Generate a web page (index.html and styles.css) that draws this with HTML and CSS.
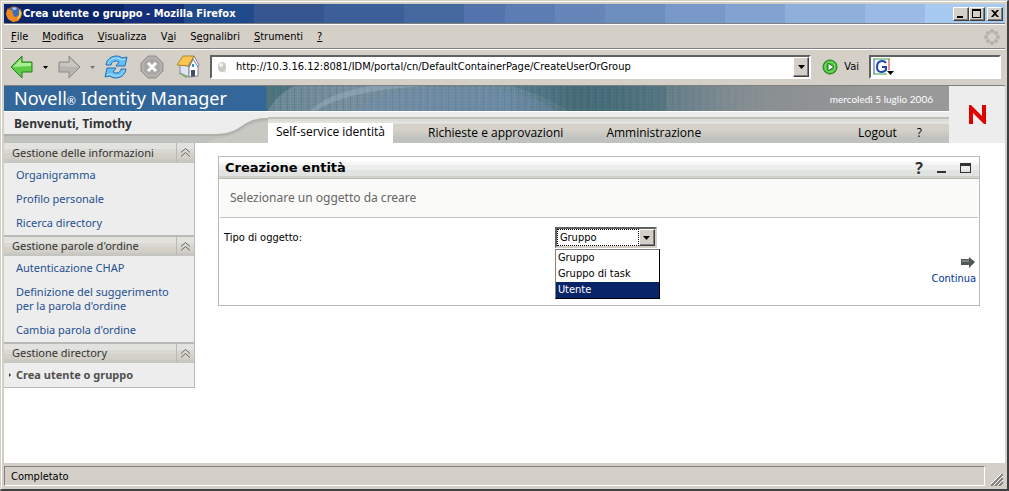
FILE: index.html
```html
<!DOCTYPE html>
<html lang="it">
<head>
    <meta charset="UTF-8">
    <meta name="viewport" content="width=device-width, initial-scale=1.0">
    <title>Crea utente o gruppo - Mozilla Firefox</title>
    <link rel="stylesheet" href="styles.css">
</head>
<body>
    <div class="window">
        <header class="titlebar">
            <svg class="fox" viewBox="0 0 16 16" aria-hidden="true">
                <circle cx="8" cy="8" r="7.500" fill="#d9600f"/>
                <circle cx="8.500" cy="6.500" r="5.500" fill="#3b6cc0"/>
                <path d="M6 2l3-1 2 2-2 1-2 0z" fill="#9cc6f0"/>
                <path d="M1 4l1-2 1 2 2 0 2 1-1 2 2 1-1 2 3 1 3-2 1-3 0-4 2 5-1 4-3 4-5 1-5-3-2-5z" fill="#f08a1c"/>
                <path d="M13 3l2 4-1 4-3 3 2-5z" fill="#fbd24a"/>
            </svg>
            <h1>Crea utente o gruppo - Mozilla Firefox</h1>
            <div class="window-buttons">
                <button type="button" aria-label="Riduci a icona"><svg viewBox="0 0 12 10"><path d="M2 7h6v2H2z"/></svg></button>
                <button type="button" aria-label="Ingrandisci"><svg viewBox="0 0 12 10"><path d="M1 0h9v9H1zM2 2v6h7V2z" fill-rule="evenodd"/></svg></button>
                <button type="button" class="close" aria-label="Chiudi"><svg viewBox="0 0 12 10"><path d="M2 1h2l2 2 2-2h2L7 4.500 10 8H8L6 6 4 8H2l3-3.500z"/></svg></button>
            </div>
        </header>

        <nav class="menubar">
            <button type="button"><u>F</u>ile</button>
            <button type="button"><u>M</u>odifica</button>
            <button type="button"><u>V</u>isualizza</button>
            <button type="button">V<u>a</u>i</button>
            <button type="button">S<u>e</u>gnalibri</button>
            <button type="button"><u>S</u>trumenti</button>
            <button type="button"><u>?</u></button>
            <svg class="throbber" viewBox="0 0 16 16" fill="#b2b0ac" aria-hidden="true">
                <circle cx="8" cy="2" r="2"/><circle cx="12" cy="4" r="2"/><circle cx="14" cy="8" r="2"/><circle cx="12" cy="12" r="2"/>
                <circle cx="8" cy="14" r="2"/><circle cx="4" cy="12" r="2"/><circle cx="2" cy="8" r="2"/><circle cx="4" cy="4" r="2"/>
            </svg>
        </nav>

        <div class="toolbar">
            <button type="button" aria-label="Indietro">
                <svg width="24" height="24" viewBox="0 0 24 24"><path d="M1 12L12 1v6h10v10H12v6z" fill="#5ccb45" stroke="#22811b"/><path d="M3 12l8-8v4h10v3z" fill="#a8ee93"/></svg>
            </button>
            <button type="button" class="history" aria-label="Cronologia indietro"><svg width="5" height="3" viewBox="0 0 5 3"><path d="M0 0h5L2.500 3z"/></svg></button>
            <button type="button" aria-label="Avanti">
                <svg width="24" height="24" viewBox="0 0 24 24"><path d="M23 12L12 1v6H2v10h10v6z" fill="#b6b5b2" stroke="#8c8b88"/><path d="M21 12l-8-8v4H3v3z" fill="#c8c7c4"/></svg>
            </button>
            <button type="button" class="history" aria-label="Cronologia avanti"><svg width="5" height="3" viewBox="0 0 5 3"><path d="M0 0h5L2.500 3z" fill="#777"/></svg></button>
            <button type="button" class="reload" aria-label="Ricarica">
                <svg width="24" height="24" viewBox="0 0 24 24" fill="#62bdf8" stroke="#2670b4">
                    <path d="M2 10C3 4 7 1 13 1c2 0 4 1 5 2l5-1-2 9h-9l3-4c-4-2-7-1-8 3z"/>
                    <path d="M22 14c-1 6-5 9-11 9-2 0-4-1-5-2l-5 1 2-9h9l-3 4c4 2 7 1 8-3z"/>
                    <path d="M4 9c1-4 5-6 9-6l5 2 3-1M20 15c-1 4-5 6-9 6l-5-2-3 1" fill="none" stroke="#b4e2fc"/>
                </svg>
            </button>
            <button type="button" class="stop" aria-label="Interrompi">
                <svg width="24" height="24" viewBox="0 0 24 24"><path d="M8 1h8l7 7v8l-7 7H8l-7-7V8z" fill="#a9a8a5" stroke="#93918d"/><path d="M8 3h8l5 5v8l-5 5H8l-5-5V8z" fill="none" stroke="#bdbcb8"/><path d="M8 8l8 8M16 8l-8 8" stroke="#fff" stroke-width="3"/></svg>
            </button>
            <button type="button" class="home" aria-label="Pagina iniziale">
                <svg width="24" height="24" viewBox="0 0 24 24">
                    <path d="M4 10l9 1v11l-9-4z" fill="#dfe5f0" stroke="#7d8799"/>
                    <path d="M13 11l5-8 4 8v10l-9 1z" fill="#fafbfd" stroke="#7d8799"/>
                    <path d="M18 1l5 9-1 2-5-8-4 8z" fill="#f2f4f8" stroke="#7d8799"/>
                    <path d="M1 10L7 1h11l-6 10z" fill="#fbc650" stroke="#b0852a"/>
                    <path d="M15 15h4v6l-4 1z" fill="#4a4f5e"/><path d="M16 9h2v3h-2z" fill="#3590d4"/>
                    <path d="M2 18l3 0 7 4-2 1z" fill="#86b072"/>
                </svg>
            </button>
            <form class="address">
                <svg class="page-icon" width="12" height="12" viewBox="0 0 12 12" aria-hidden="true"><path d="M2 10h7l2 1-4 1z" fill="#eee"/><rect x="1" y="1" width="8" height="10" rx="4" fill="#ccccc7"/><circle cx="4" cy="4" r="2" fill="#f3f3f0"/></svg>
                <input type="text" aria-label="Indirizzo" value="http://10.3.16.12:8081/IDM/portal/cn/DefaultContainerPage/CreateUserOrGroup">
                <button type="button" class="raised" aria-label="Mostra indirizzi"><svg width="7" height="4" viewBox="0 0 7 4"><path d="M0 0h7L3.500 4z"/></svg></button>
            </form>
            <button type="button" class="go">
                <svg width="16" height="16" viewBox="0 0 16 16" aria-hidden="true"><circle cx="8" cy="8" r="7" fill="#45bd35" stroke="#1d7d1b"/><circle cx="8" cy="8" r="5" fill="none" stroke="#91e67c"/><path d="M6 4l6 4-6 4z" fill="#fff" stroke="#187318"/></svg>
                Vai
            </button>
            <form class="search">
                <svg width="22" height="18" viewBox="0 0 22 18" aria-hidden="true">
                    <path d="M1 16V1" stroke="#2560c8"/><path d="M0 1h17" stroke="#35a24a"/><path d="M16 1v11" stroke="#d4302c"/><path d="M0 16h14" stroke="#35a24a"/>
                    <path d="M13 5C11 2 4 2 4 9c0 6 6 6 9 3V9H9" fill="none" stroke="#2145b0" stroke-width="2"/>
                    <path d="M14 13h7l-3.500 4z"/>
                </svg>
                <input type="text" aria-label="Cerca">
            </form>
        </div>

        <div class="page">
            <header class="masthead">
                <div class="masthead-rows">
                    <div class="brand-row">
                        <div class="brand">Novell<small>®</small> Identity Manager</div>
                        <div class="banner">
                            <svg class="waves" viewBox="0 0 683 25" preserveAspectRatio="none" aria-hidden="true">
                                <path d="M0 0H28C16 6 8 14 2 25H0z" fill="#2f5f68" opacity=".5"/>
                                <path d="M50 25C72 10 110 3 160 0H104C70 6 56 14 44 25z" fill="#b4c8d6" opacity=".3"/>
                                <path d="M86 25C106 10 130 4 170 2C240 0 270 10 290 25z" fill="#6f8cae" opacity=".35"/>
                                <path d="M246 0C272 8 290 16 302 25H400V0z" fill="#1d5663" opacity=".2"/>
                            </svg>
                            <time datetime="2006-07-05">mercoledì 5 luglio 2006</time>
                        </div>
                    </div>
                    <div class="nav-row">
                        <div class="greeting">
                            <svg viewBox="0 0 264 31" aria-hidden="true">
                                <path d="M0 22H212C240 22 236 7 264 7V31H0z" fill="#bfc1bc"/>
                                <path d="M214 26C240 24 240 10 264 10V31H200z" fill="#c9c9c3"/>
                                <path d="M0 0H264V6C236 6 240 22 212 22H0z" fill="#ededed"/>
                                <path d="M264 7C236 7 240 23 212 23H0" fill="none" stroke="#b1b1ab" stroke-width="2"/>
                            </svg>
                            <strong>Benvenuti, Timothy</strong>
                        </div>
                        <nav class="tabs">
                            <a href="#" class="active">Self-service identità</a>
                            <a href="#">Richieste e approvazioni</a>
                            <a href="#">Amministrazione</a>
                            <a href="#" class="logout">Logout</a>
                            <a href="#" class="help">?</a>
                        </nav>
                    </div>
                </div>
                <div class="logo">
                    <svg width="17" height="19" viewBox="0 0 17 19" role="img" aria-label="Novell"><path d="M0 0h2L13 11V0h4v19h-2L4 8v11H0z" fill="#e00000"/></svg>
                </div>
            </header>

            <div class="content">
                <aside class="sidebar">
                    <section>
                        <h2>Gestione delle informazioni <button type="button" aria-label="Comprimi"><svg viewBox="0 0 9 9"><path d="M0 4.500l4.500-4 4.500 4M0 8.500l4.500-4 4.500 4"/></svg></button></h2>
                        <ul>
                            <li><a href="#">Organigramma</a></li>
                            <li><a href="#">Profilo personale</a></li>
                            <li><a href="#">Ricerca directory</a></li>
                        </ul>
                    </section>
                    <section>
                        <h2>Gestione parole d'ordine <button type="button" aria-label="Comprimi"><svg viewBox="0 0 9 9"><path d="M0 4.500l4.500-4 4.500 4M0 8.500l4.500-4 4.500 4"/></svg></button></h2>
                        <ul>
                            <li><a href="#">Autenticazione CHAP</a></li>
                            <li><a href="#">Definizione del suggerimento<br>per la parola d'ordine</a></li>
                            <li><a href="#">Cambia parola d'ordine</a></li>
                        </ul>
                    </section>
                    <section>
                        <h2>Gestione directory <button type="button" aria-label="Comprimi"><svg viewBox="0 0 9 9"><path d="M0 4.500l4.500-4 4.500 4M0 8.500l4.500-4 4.500 4"/></svg></button></h2>
                        <ul>
                            <li class="current"><a href="#">Crea utente o gruppo</a></li>
                        </ul>
                    </section>
                </aside>

                <main class="portlet">
                    <header class="portlet-title">
                        <h2>Creazione entità</h2>
                        <button type="button" class="portlet-help" aria-label="Guida">?</button>
                        <button type="button" aria-label="Riduci"><svg width="11" height="10" viewBox="0 0 11 10"><path d="M1 8h9v2H1z"/></svg></button>
                        <button type="button" aria-label="Ingrandisci"><svg width="11" height="10" viewBox="0 0 11 10"><path d="M0 0h11v10H0zM1 3v6h9V3z" fill-rule="evenodd"/></svg></button>
                    </header>
                    <p class="intro">Selezionare un oggetto da creare</p>
                    <form class="fields">
                        <label for="objectType">Tipo di oggetto:</label>
                        <div class="combo">
                            <select id="objectType">
                                <option>Gruppo</option>
                                <option>Gruppo di task</option>
                                <option>Utente</option>
                            </select>
                            <span class="raised combo-arrow"><svg width="7" height="4" viewBox="0 0 7 4"><path d="M0 0h7L3.500 4z"/></svg></span>
                            <ul class="options">
                                <li>Gruppo</li>
                                <li>Gruppo di task</li>
                                <li class="selected">Utente</li>
                            </ul>
                        </div>
                        <a href="#" class="continue">
                            <svg width="15" height="11" viewBox="0 0 15 11" aria-hidden="true"><path d="M0 2h8V0l6 5-6 6V8H0z" fill="#505656"/><path d="M1 3h7v2H1z" fill="#7e8484"/></svg>
                            Continua
                        </a>
                    </form>
                </main>
            </div>
        </div>

        <footer class="statusbar">
            <div class="status">Completato</div>
            <svg class="grip" width="12" height="12" viewBox="0 0 12 12" stroke="#808080" stroke-width="2" aria-hidden="true">
                <path d="M0 12L12 0M4 12l8-8M8 12l4-4"/><path d="M-1 11L11-1M3 11l9-9M7 11l5-5" stroke="#fff" stroke-width="1"/>
            </svg>
        </footer>
    </div>
</body>
</html>
```

FILE: styles.css
```css
* {
    box-sizing: border-box;
}

body {
    margin: 0;
    font: 11px/14px "DejaVu Sans Condensed", "DejaVu Sans", sans-serif;
    color: #000;
}

h1, h2, p, ul, form {
    margin: 0;
    padding: 0;
}

ul {
    list-style: none;
}

a {
    text-decoration: none;
}

button {
    display: flex;
    align-items: center;
    margin: 0;
    padding: 0;
    border: 0;
    background: none;
    font: inherit;
    color: inherit;
}

svg {
    display: block;
    flex: none;
}

input, select {
    min-width: 0;
    margin: 0;
    padding: 0;
    border: 0;
    background: none;
    font: inherit;
    color: inherit;
}

.window {
    display: flex;
    flex-direction: column;
    min-height: 100vh;
    padding: 3px 2px 2px 3px;
    border: solid;
    border-width: 1px 2px 2px 1px;
    border-color: #d4d0c8 #404040 #404040 #d4d0c8;
    box-shadow: inset 1px 1px #fff;
    background: #d4d0c8;
}

/* Title bar */
.titlebar {
    display: flex;
    align-items: center;
    height: 19px;
    padding: 0 2px;
    background: linear-gradient(to right,
        #0a246a 0 12%, #14307a 12% 18%, #1f4b8c 18% 25%, #35568f 25% 32%,
        #3c5f9a 32% 40%, #45689f 40% 46%, #5273ac 46% 50%, #5c7db3 50% 55%,
        #6685b8 55% 60%, #6d8fc0 60% 66%, #7798c8 66% 72%, #82a3d1 72% 78%,
        #90b0dc 78% 86%, #9bbbe6 86% 92%, #a6caf0 92%);
}

.fox {
    width: 16px;
    height: 16px;
}

.titlebar h1 {
    flex: 1;
    padding-left: 1px;
    font-size: 11px;
    color: #fff;
}

.window-buttons {
    display: flex;
}

.window-buttons button,
.raised {
    display: flex;
    align-items: center;
    justify-content: center;
    width: 16px;
    height: 14px;
    border: 1px solid;
    border-color: #fff #404040 #404040 #fff;
    background: #d4d0c8;
    box-shadow: inset -1px -1px #808080;
}

.window-buttons .close {
    margin-left: 2px;
}

.window-buttons svg {
    width: 12px;
    height: 10px;
}

/* Menu and toolbar */
.menubar {
    display: flex;
    align-items: center;
    gap: 14px;
    height: 26px;
    padding: 1px 5px 0 7px;
    border-top: 1px solid #808080;
    border-bottom: 1px solid #808080;
    box-shadow: inset 0 1px #fff;
}

.throbber {
    width: 16px;
    height: 16px;
    margin-left: auto;
}

.toolbar {
    display: flex;
    align-items: center;
    height: 37px;
    padding: 0 4px 0 6px;
    border-bottom: 1px solid #808080;
    box-shadow: inset 0 1px #fff;
}

.history {
    width: 23px;
    justify-content: center;
}

.reload, .stop {
    margin-right: 12px;
}

.address, .search {
    display: flex;
    align-items: center;
    height: 24px;
    border: 2px solid;
    border-color: #606060 #fff #fff #606060;
    background: #fff;
}

.address {
    flex: 1;
    margin-left: 10px;
    padding-left: 5px;
}

.address input {
    flex: 1;
    padding-left: 7px;
}

.address .raised {
    height: 20px;
}

.go {
    gap: 6px;
    margin: 0 10px 0 11px;
}

.search {
    width: 132px;
    padding-left: 2px;
}

.search input {
    flex: 1;
}

/* Portal header */
.page {
    flex: 1;
    display: flex;
    flex-direction: column;
    background: #fff;
    font-family: "Noto Sans", "Open Sans", sans-serif;
}

.masthead {
    display: flex;
}

.masthead-rows {
    flex: 1;
}

.brand-row {
    display: flex;
    height: 25px;
}

.brand {
    width: 262px;
    padding-left: 10px;
    background: #336699;
    font-size: 18px;
    line-height: 25px;
    color: #fff;
}

.brand small {
    font-size: 11px;
}

.banner {
    flex: 1;
    display: grid;
    align-items: center;
    background:
        linear-gradient(to right, transparent 50%, #8d9192 78%, #999 90%),
        repeating-linear-gradient(to bottom, rgba(20, 50, 60, .06) 0 1px, transparent 1px 3px),
        repeating-linear-gradient(to right, rgba(20, 50, 60, .12) 0 1px, transparent 1px 3px, rgba(255, 255, 255, .05) 3px 4px, transparent 4px 7px),
        linear-gradient(to right, #6b8897, #7890a0 12%, #6b8b9f 35%, #53747f 45%, #55788a 62%, #7f8f98 75%);
}

.banner > * {
    grid-area: 1 / 1;
}

.waves {
    width: 100%;
    height: 25px;
}

.banner time {
    justify-self: end;
    padding-right: 16px;
    font: 10px/14px Lato, sans-serif;
    color: #fff;
}

.nav-row {
    display: flex;
    height: 32px;
    border-top: 1px solid #fff;
    background: linear-gradient(to bottom, #ededed 0 5px, #c0c0b9 5px 7px, #dcdcd7 7px 9px, #e2e2df 9px 12px, #d4d1c8 12px 18px, #c0c2be 26px);
}

.greeting {
    display: grid;
    width: 264px;
}

.greeting > * {
    grid-area: 1 / 1;
}

.greeting strong {
    padding: 5px 10px;
    font: bold 12px/14px "Open Sans", sans-serif;
    color: #333;
}

.tabs {
    flex: 1;
    display: flex;
    align-items: stretch;
    padding-top: 11px;
    font: 12px/20px "Open Sans", "Noto Sans", sans-serif;
}

.tabs a {
    padding-left: 35px;
    color: #000;
}

.tabs .active {
    padding: 0 8px;
    background: #fff;
    line-height: 18px;
}

.tabs .active + a {
    padding-right: 8px;
}

.tabs .logout {
    margin-left: auto;
}

.tabs .help {
    padding: 0 27px 0 20px;
}

.logo {
    display: flex;
    align-items: center;
    justify-content: center;
    width: 56px;
    background: #ededed;
}

/* Side menu */
.content {
    flex: 1;
    display: flex;
    align-items: flex-start;
}

.sidebar {
    flex: none;
    width: 191px;
    border: solid #b9bab5;
    border-width: 0 1px 1px 0;
    background: #ededed;
}

.sidebar h2 {
    display: flex;
    align-items: center;
    justify-content: space-between;
    height: 20px;
    padding-left: 8px;
    border-bottom: 1px solid #c4c5c0;
    background: linear-gradient(to bottom, #e2e2df 0 6px, #d9d8d2 6px 10px, #d4d1c8 10px 14px, #c3c5c0);
    font-size: 11px;
    font-weight: normal;
    color: #333;
}

.sidebar section + section h2 {
    border-top: 2px solid #b9bab5;
    height: 21px;
}

.sidebar h2 button {
    align-self: stretch;
    justify-content: center;
    width: 18px;
    border-left: 1px solid #b9bab5;
}

.sidebar h2 svg {
    width: 9px;
    height: 9px;
    fill: none;
    stroke: #666;
}

.sidebar ul {
    display: flex;
    flex-direction: column;
    gap: 10px;
    padding: 5px 12px;
}

.sidebar li {
    line-height: 14px;
}

.sidebar a {
    color: #25508f;
}

.current {
    display: flex;
    align-items: center;
    font-weight: bold;
}

.current::before {
    content: "";
    margin: 0 5px 0 -7px;
    border: solid transparent;
    border-width: 2px 0 2px 2px;
    border-left-color: #333;
}

.sidebar .current a {
    color: #505050;
}

/* Portlet */
.portlet {
    flex: 1;
    margin: 13px 25px 0 23px;
    border: 1px solid #b9bab5;
}

.portlet-title {
    display: flex;
    align-items: center;
    height: 22px;
    padding: 0 8px 0 6px;
    border-bottom: 1px solid #b9bab5;
    background: linear-gradient(to bottom, #fff 0 5px, #f6f6f6 5px 8px, #ededed 8px 13px, #e1e3e0 13px 19px, #d4d1c8 19px);
}

.portlet-title h2 {
    flex: 1;
    font: bold 13px/14px "DejaVu Sans", sans-serif;
}

.portlet-title button {
    margin-left: 13px;
}

.portlet-title .portlet-help {
    font-size: 16px;
    font-weight: bold;
    color: #333;
}

.portlet-title svg {
    fill: #333;
}

.intro {
    margin: 0 1px;
    padding: 12px 10px;
    border-bottom: 1px solid #c4c5c0;
    background: #fafaf8;
    font-size: 12px;
    color: #666;
}

.fields {
    display: grid;
    grid-template-columns: 44% auto 1fr;
    min-height: 87px;
    padding: 9px 3px 9px 5px;
    font-family: "DejaVu Sans Condensed", "DejaVu Sans", sans-serif;
}

.fields label {
    line-height: 22px;
}

.combo {
    position: relative;
    display: flex;
    align-self: start;
    width: 102px;
    height: 21px;
    border: 2px solid;
    border-color: #606060 #d4d0c8 #d4d0c8 #606060;
}

.combo select {
    flex: 1;
    appearance: none;
    padding-left: 2px;
    border: 1px dotted #000;
}

.combo-arrow {
    height: 17px;
    pointer-events: none;
}

/* Open list, drawn over the form */
.options {
    position: absolute;
    top: 20px;
    left: -2px;
    width: 105px;
    border: 1px solid #000;
    border-top-color: #808080;
    border-left-color: #808080;
    background: #fff;
}

.options li {
    padding-left: 2px;
    line-height: 16px;
}

.options .selected {
    background: #0a246a;
    color: #fff;
}

.continue {
    display: flex;
    flex-direction: column;
    align-items: flex-end;
    gap: 4px;
    padding-top: 30px;
    color: #003399;
}

/* Status bar */
.statusbar {
    display: flex;
    align-items: flex-end;
    justify-content: space-between;
    gap: 6px;
    height: 24px;
    padding: 2px 2px 1px 0;
}

.status {
    flex: 1;
    height: 20px;
    padding-left: 6px;
    border: 1px solid;
    border-color: #808080 #fff #fff #808080;
    line-height: 20px;
}
```
